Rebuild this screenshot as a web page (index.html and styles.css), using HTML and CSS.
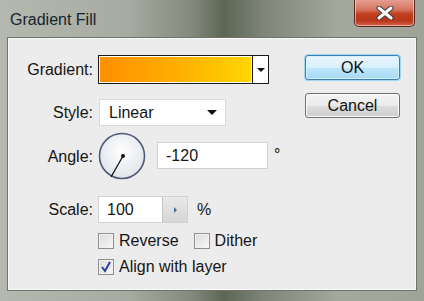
FILE: index.html
```html
<!DOCTYPE html>
<html lang="en">
<head>
    <meta charset="UTF-8">
    <title>Gradient Fill</title>
    <link rel="stylesheet" href="styles.css">
</head>
<body>
    <div class="window">
        <div class="titlebar">
            <span class="title">Gradient Fill</span>
            <button class="close" aria-label="Close">
                <svg width="22" height="14" viewBox="0 0 22 14">
                    <path d="M5 2 L17 12 M17 2 L5 12" stroke="#3b3b3b" stroke-width="5" stroke-linecap="round"/>
                    <path d="M5 2 L17 12 M17 2 L5 12" stroke="#fff" stroke-width="3" stroke-linecap="round"/>
                </svg>
            </button>
        </div>

        <div class="panel">
            <div class="form">
                <div class="row row-gradient">
                    <label class="label">Gradient:</label>
                    <div class="swatch">
                        <div class="swatch-fill"></div>
                        <div class="swatch-arrow"><span class="tri"></span></div>
                    </div>
                </div>

                <div class="row row-style">
                    <label class="label">Style:</label>
                    <div class="select">
                        <span>Linear</span>
                        <span class="tri"></span>
                    </div>
                </div>

                <div class="row row-angle">
                    <label class="label">Angle:</label>
                    <!-- dial: needle points at -120 degrees -->
                    <svg class="dial" width="48" height="48" viewBox="0 0 48 48">
                        <defs>
                            <radialGradient id="dialBg" cx="50%" cy="40%" r="60%">
                                <stop offset="0" stop-color="#ffffff"/>
                                <stop offset="1" stop-color="#e2e4ea"/>
                            </radialGradient>
                        </defs>
                        <circle cx="24" cy="24" r="22.5" fill="url(#dialBg)" stroke="#4d5a78" stroke-width="1.6"/>
                        <line x1="25" y1="24" x2="13" y2="45" stroke="#111" stroke-width="1.3"/>
                        <circle cx="25" cy="24" r="2" fill="#111"/>
                    </svg>
                    <div class="input input-angle">-120</div>
                    <span class="unit unit-deg">°</span>
                </div>

                <div class="row row-scale">
                    <label class="label">Scale:</label>
                    <div class="input input-scale">
                        <span class="value">100</span>
                        <span class="spin"><span class="spin-tri"></span></span>
                    </div>
                    <span class="unit">%</span>
                </div>

                <div class="row row-check">
                    <span class="label"></span>
                    <label class="check"><span class="box"></span>Reverse</label>
                    <label class="check"><span class="box"></span>Dither</label>
                </div>

                <div class="row row-check row-align">
                    <span class="label"></span>
                    <label class="check"><span class="box checked">
                        <svg width="12" height="12" viewBox="0 0 12 12">
                            <path d="M2 6 L5 10 L10 1" fill="none" stroke="#2b3e9a" stroke-width="2"/>
                        </svg>
                    </span>Align with layer</label>
                </div>
            </div>

            <div class="buttons">
                <button class="btn btn-ok">OK</button>
                <button class="btn btn-cancel">Cancel</button>
            </div>
        </div>
    </div>
</body>
</html>
```

FILE: styles.css
```css
* { box-sizing: border-box; }

body {
    margin: 0;
    font-family: "Liberation Sans", Arial, sans-serif;
    background-color: #5d6555;
}

.window {
    width: 424px;
    height: 301px;
    overflow: hidden;
    background: linear-gradient(90deg, #b4b8ae 0%, #a7aba1 30%, #848a7d 45%, #5c6655 53%, #7e8578 62%, #a4a89d 80%, #9fa398 100%);
    display: flex;
    flex-direction: column;
}

/* Title bar */
.titlebar {
    height: 38px;
    display: flex;
    align-items: flex-start;
    justify-content: space-between;
    flex-shrink: 0;
}
.title {
    margin: 11px 0 0 10px;
    font-size: 16px;
    color: #15232c;
}
.close {
    margin: -1px 9px 0 0;
    width: 61px;
    height: 28px;
    border: 1px solid #5a2a20;
    border-top: none;
    border-radius: 0 0 5px 5px;
    background: linear-gradient(180deg, #e6a295 0%, #d6735f 40%, #c1401f 55%, #b8361b 80%, #d4644a 100%);
    box-shadow: inset 0 0 0 1px rgba(255, 220, 210, 0.6);
    padding: 0;
    display: flex;
    align-items: center;
    justify-content: center;
}

/* Main panel */
.panel {
    margin: 0 8px 0 8px;
    height: 252px;
    background-color: #ececec;
    border: 1px solid #f8f8f8;
    box-shadow: 0 0 0 1px #6e7568;
    display: flex;
    font-size: 16px;
    color: #151515;
}

.form {
    width: 280px;
    padding-top: 16px;
}

.row {
    display: flex;
    align-items: center;
}
.label {
    width: 84px;
    text-align: right;
    margin-right: 5px;
    flex-shrink: 0;
}

.row-gradient { height: 29px; }
.row-style { height: 27px; margin-top: 15px; }
.row-angle { height: 48px; margin-top: 7px; }
.row-scale { height: 27px; margin-top: 15px; }
.row-check { height: 16px; margin-top: 10px; }

/* Gradient swatch */
.swatch {
    width: 171px;
    height: 29px;
    border: 1px solid #1a1a1a;
    display: flex;
    background-color: #fff;
}
.swatch-fill {
    flex: 1;
    margin: 1px;
    background: linear-gradient(90deg, #ff9000 0%, #ffae00 50%, #ffd600 100%);
}
.swatch-arrow {
    width: 16px;
    border-left: 1px solid #1a1a1a;
    display: flex;
    align-items: center;
    justify-content: center;
}
.tri {
    width: 0;
    height: 0;
    border-left: 4px solid transparent;
    border-right: 4px solid transparent;
    border-top: 4px solid #111;
}

/* Style select */
.select {
    width: 127px;
    height: 27px;
    margin-left: 1px;
    padding: 0 8px 0 9px;
    background-color: #fff;
    border: 1px solid #dadada;
    display: flex;
    align-items: center;
    justify-content: space-between;
}
.select .tri {
    border-left-width: 5px;
    border-right-width: 5px;
    border-top-width: 5px;
}

/* Angle dial */
.dial {
    margin-top: -3px;
}
.input {
    height: 27px;
    background-color: #fff;
    border: 1px solid #d2d2d2;
    display: flex;
    align-items: center;
}
.input-angle {
    width: 111px;
    margin-left: 11px;
    padding-left: 8px;
    margin-top: -3px;
}
.unit {
    margin-left: 9px;
}
.unit-deg {
    align-self: flex-start;
    margin-top: 13px;
    margin-left: 6px;
}

/* Scale spinner */
.input-scale {
    width: 90px;
}
.input-scale .value {
    flex: 1;
    padding-left: 8px;
}
.spin {
    width: 25px;
    height: 25px;
    background: linear-gradient(180deg, #e9e9e9, #d6d6d6);
    border-left: 1px solid #c4c4c4;
    display: flex;
    align-items: center;
    justify-content: center;
}
.spin-tri {
    width: 0;
    height: 0;
    border-top: 3px solid transparent;
    border-bottom: 3px solid transparent;
    border-left: 3px solid #4a6a9a;
}

/* Checkboxes */
.check {
    display: flex;
    align-items: center;
    margin-right: 15px;
}
.box {
    width: 16px;
    height: 16px;
    border: 1px solid #8f8f8f;
    background: linear-gradient(135deg, #dcdcdc, #f6f6f6);
    box-shadow: inset 0 0 0 1px #f2f2f2;
    margin-right: 5px;
    display: flex;
    align-items: center;
    justify-content: center;
}

/* OK / Cancel */
.buttons {
    display: flex;
    flex-direction: column;
    padding: 16px 0 0 16px;
    gap: 12px;
}
.btn {
    width: 95px;
    height: 25px;
    font-family: "Liberation Sans", Arial, sans-serif;
    font-size: 16px;
    color: #111;
    border-radius: 3px;
    padding: 0;
}
.btn-ok {
    border: 1px solid #3c7fb1;
    background: linear-gradient(180deg, #eaf6fd 0%, #d9f0fc 50%, #bee6fd 51%, #a7d9f5 100%);
    box-shadow: 0 0 0 1px #9fd6f2, inset 0 0 0 1px #d6f0fc;
}
.btn-cancel {
    margin-top: 1px;
    border: 1px solid #707070;
    background: linear-gradient(180deg, #f3f3f3 0%, #ebebeb 50%, #dddddd 51%, #cfcfcf 100%);
    box-shadow: inset 0 0 0 1px #fbfbfb;
}
```
